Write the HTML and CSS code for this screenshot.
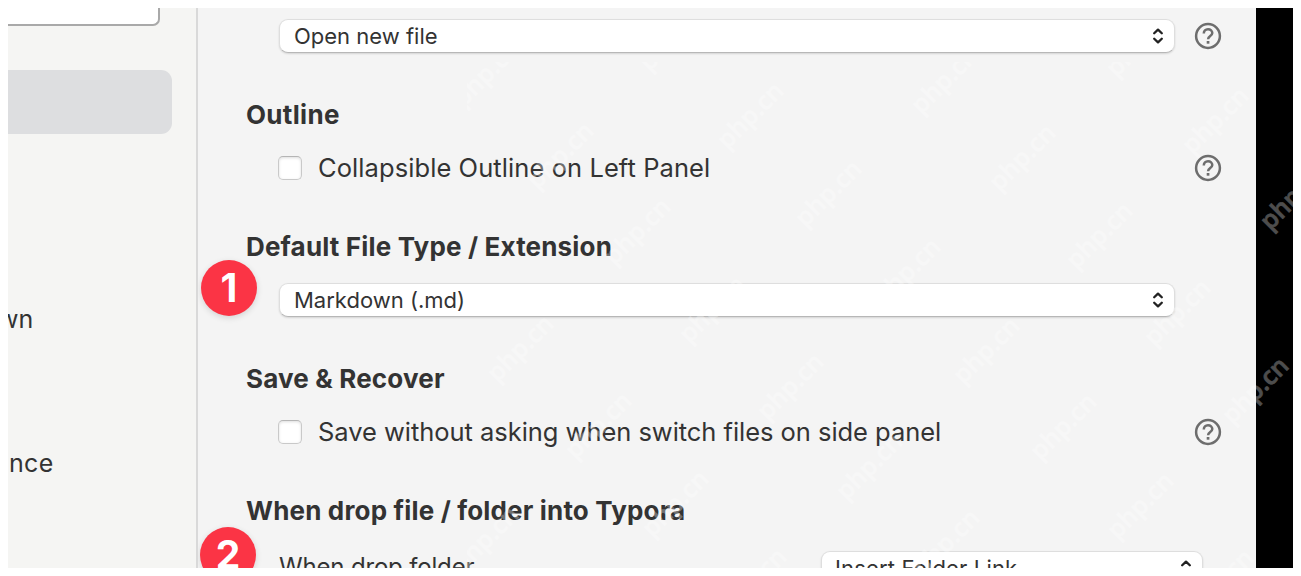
FILE: index.html
```html
<!DOCTYPE html>
<html lang="en">
<head>
<meta charset="utf-8">
<title>Preferences</title>
<link rel="stylesheet" href="styles.css">
</head>
<body>
<svg class="defs" width="0" height="0">
  <symbol id="help" viewBox="0 0 28 28"><circle cx="14" cy="14" r="11.9" fill="none" stroke="#6d6d6d" stroke-width="2.5"/><path d="M9.8 11.4C9.8 9 11.5 7.2 14 7.2S18.3 8.9 18.3 11.1C18.3 14 14.1 14.2 14.1 17.2" fill="none" stroke="#6d6d6d" stroke-width="2.5"/><path d="M12.7 19h2.7v2.7h-2.7z" fill="#6d6d6d"/></symbol>
  <symbol id="updown" viewBox="0 0 12 18"><path d="M2.2 6.3L6 2.6l3.8 3.7M2.2 11.7L6 15.4l3.8-3.7" fill="none" stroke="#222" stroke-width="2.3" stroke-linecap="round" stroke-linejoin="round"/></symbol>
</svg>
<div class="window">
  <aside class="sidebar">
    <div class="search"></div>
    <div class="nav-active"></div>
    <div class="nav nav-first"><span class="nav-markdown">wn</span></div>
    <div class="nav nav-second"><span>nce</span></div>
  </aside>
  <main class="panel">
    <div class="row"><div class="select"><span>Open new file</span><svg class="arrows"><use href="#updown"/></svg></div><svg class="help"><use href="#help"/></svg></div>
    <h2 class="h-outline">Outline</h2>
    <div class="row"><i class="check"></i><span class="label l-outline">Collapsible Outline on Left Panel</span><svg class="help"><use href="#help"/></svg></div>
    <h2>Default File Type / Extension</h2>
    <div class="row"><div class="select"><span>Markdown (.md)</span><svg class="arrows"><use href="#updown"/></svg></div></div>
    <h2>Save &amp; Recover</h2>
    <div class="row"><i class="check"></i><span class="label l-save">Save without asking when switch files on side panel</span><svg class="help"><use href="#help"/></svg></div>
    <h2>When drop file / folder into Typora</h2>
    <div class="row last"><span class="drop-label">When drop folder</span><div class="select small"><span>Insert Folder Link</span><svg class="arrows"><use href="#updown"/></svg></div></div>
    <div class="badge one">1</div>
    <div class="badge two">2</div>
  </main>
  <div class="backdrop"></div>
  <svg class="watermark" viewBox="467 62 826 506">
    <defs><text id="mark" text-anchor="middle" transform="rotate(-45)" y="6">php.cn</text></defs>
    <use href="#mark" x="488" y="75"/><use href="#mark" x="562" y="157"/><use href="#mark" x="639" y="233"/><use href="#mark" x="714" y="311"/><use href="#mark" x="792" y="388"/><use href="#mark" x="871" y="468"/><use href="#mark" x="948" y="544"/>
    <use href="#mark" x="674" y="39"/><use href="#mark" x="752" y="117"/><use href="#mark" x="830" y="195"/><use href="#mark" x="909" y="273"/><use href="#mark" x="988" y="352"/><use href="#mark" x="1065" y="428"/><use href="#mark" x="1142" y="507"/><use href="#mark" x="1222" y="584"/>
    <use href="#mark" x="946" y="82"/><use href="#mark" x="1024" y="159"/><use href="#mark" x="1101" y="237"/><use href="#mark" x="1179" y="314"/><use href="#mark" x="1257" y="392"/>
    <use href="#mark" x="1141" y="45"/><use href="#mark" x="1217" y="122"/><use href="#mark" x="1295" y="198"/>
    <use href="#mark" x="522" y="350"/><use href="#mark" x="600" y="427"/><use href="#mark" x="677" y="505"/><use href="#mark" x="755" y="583"/><use href="#mark" x="487" y="541"/>
  </svg>
</div>
</body>
</html>
```
FILE: styles.css
```css
* { box-sizing: border-box; }
body { margin: 8px; background: #fff; font-family: Inter, sans-serif; color: #333; }
.defs { position: absolute; }
.window { position: relative; display: flex; width: 1285px; height: 560px; overflow: hidden; }
.sidebar { width: 190px; flex: none; background: #f5f5f3; border-right: 2px solid #d9d9d9; overflow: hidden; }
.search { width: 152px; height: 18px; background: #fff; border: solid #a9a9a9; border-width: 0 2px 2px 0; border-bottom-right-radius: 7px; }
.nav-active { width: 164px; height: 64px; margin-top: 44px; background: #dddee0; border-radius: 0 11px 11px 0; }
.nav { height: 40px; line-height: 40px; font-size: 25px; white-space: nowrap; }
.nav-first { margin-top: 165px; }
.nav-second { margin-top: 104px; padding-left: 1px; letter-spacing: .3px; }
.nav-markdown { margin-left: -10px; }
.panel { position: relative; width: 1058px; flex: none; background: #f4f4f4; padding: 11px 0 0 49px; overflow: hidden; }
.row { display: flex; align-items: center; height: 34px; padding-left: 32px; white-space: nowrap; }
.row.last { margin-top: 24px; }
.select { width: 896px; height: 34px; display: flex; align-items: center; justify-content: space-between; padding: 0 10px 0 14px; background: #fff; border: 1px solid #dedede; border-bottom-color: #b7b7b7; border-radius: 9px; box-shadow: 0 1px 2px #0002; font-size: 22px; }
.arrows { width: 12px; height: 18px; }
.help { width: 28px; height: 28px; margin-left: auto; margin-right: 34px; }
.select + .help { margin-left: 19px; margin-right: 0; }
h2 { margin: 46px 0 20px -1px; font-size: 26px; line-height: 32px; font-weight: 700; letter-spacing: .17px; white-space: nowrap; }
.h-outline { letter-spacing: .3px; }
.check { width: 24px; height: 24px; margin-left: -1px; background: #fff; border: 1px solid #c9c9c9; border-top-color: #b5b5b5; border-radius: 5px; box-shadow: inset 0 1px 3px #0002; }
.label { margin-left: 16px; font-size: 25.5px; line-height: 32px; }
.l-outline { letter-spacing: .08px; }
.l-save { letter-spacing: -.04px; }
.drop-label { width: 542px; flex: none; padding-bottom: 3px; font-size: 24px; letter-spacing: -.17px; }
.select.small { width: 382px; padding-left: 13px; letter-spacing: .15px; }
.badge { position: absolute; width: 56px; height: 56px; border-radius: 50%; background: #fb3445; color: #fff; text-align: center; font-weight: 700; font-size: 39px; line-height: 55px; box-shadow: 0 2px 6px #0002; }
.one { left: 3px; top: 252px; }
.two { left: 2px; top: 519px; }
.backdrop { width: 37px; background: #000; }
.watermark { position: absolute; left: 459px; top: 54px; width: 826px; height: 506px; fill: #fff; stroke: #fff; stroke-width: .6px; opacity: .3; font: 600 25px "Open Sans", sans-serif; }
```
